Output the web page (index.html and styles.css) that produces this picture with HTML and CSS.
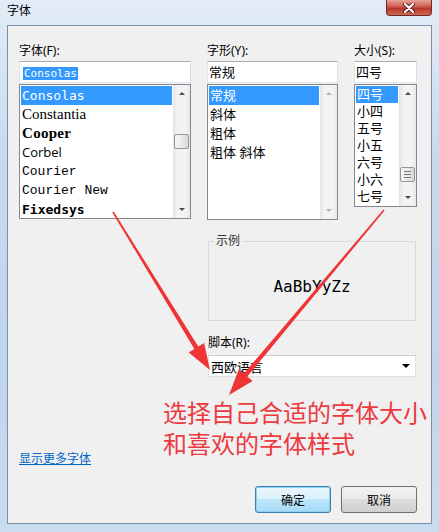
FILE: index.html
```html
<!DOCTYPE html>
<html lang="zh-CN">
<head>
  <meta charset="UTF-8">
  <title>字体</title>
  <link rel="stylesheet" href="styles.css">
</head>
<body>

  <div class="window">
    <div class="titlebar">
      <span class="title">字体</span>
      <button class="close" title="关闭">
        <svg width="12" height="10" viewBox="0 0 12 10">
          <path d="M2 1 L10 9 M10 1 L2 9" stroke="#5a1f1a" stroke-width="4" stroke-linecap="round"/>
          <path d="M2 1 L10 9 M10 1 L2 9" stroke="#fff" stroke-width="2.2" stroke-linecap="round"/>
        </svg>
      </button>
    </div>

    <div class="client">
      <div class="pickers">
        <!-- Schriftart -->
        <div class="field">
          <label>字体(F):</label>
          <div class="textbox"><span class="selected mono">Consolas</span></div>
          <div class="listbox font-list">
            <ul class="items">
              <li class="active f-consolas">Consolas</li>
              <li class="f-constantia">Constantia</li>
              <li class="f-cooper">Cooper</li>
              <li class="f-corbel">Corbel</li>
              <li class="f-courier">Courier</li>
              <li class="f-courier">Courier New</li>
              <li class="f-fixedsys">Fixedsys</li>
            </ul>
            <div class="scrollbar">
              <span class="arrow up"></span>
              <span class="thumb font-thumb"></span>
              <span class="arrow down"></span>
            </div>
          </div>
        </div>

        <!-- Schriftschnitt -->
        <div class="field">
          <label>字形(Y):</label>
          <div class="textbox">常规</div>
          <div class="listbox style-list">
            <ul class="items">
              <li class="active">常规</li>
              <li>斜体</li>
              <li>粗体</li>
              <li>粗体 斜体</li>
            </ul>
            <div class="scrollbar disabled">
              <span class="arrow up"></span>
              <span class="arrow down"></span>
            </div>
          </div>
        </div>

        <!-- Größe -->
        <div class="field">
          <label>大小(S):</label>
          <div class="textbox">四号</div>
          <div class="listbox size-list">
            <ul class="items">
              <li class="active">四号</li>
              <li>小四</li>
              <li>五号</li>
              <li>小五</li>
              <li>六号</li>
              <li>小六</li>
              <li>七号</li>
            </ul>
            <div class="scrollbar">
              <span class="arrow up"></span>
              <span class="thumb size-thumb"></span>
              <span class="arrow down"></span>
            </div>
          </div>
        </div>
      </div>

      <div class="lower">
        <fieldset class="sample">
          <legend>示例</legend>
          <div class="sample-text">AaBbYyZz</div>
        </fieldset>
        <label class="script-label">脚本(R):</label>
        <div class="select">
          <span>西欧语言</span>
          <span class="select-arrow"></span>
        </div>
      </div>

      <div class="footer">
        <a href="#" class="more">显示更多字体</a>
        <div class="buttons">
          <button class="btn default">确定</button>
          <button class="btn">取消</button>
        </div>
      </div>
    </div>

    <p class="note">选择自己合适的字体大小<br>和喜欢的字体样式</p>

    <svg class="arrows" width="439" height="532" viewBox="0 0 439 532">
      <g fill="#ee3434">
        <polygon points="112.3,212.4 113.7,211.6 200.5,350.1 196.5,352.5"/>
        <polygon points="210,370 188.7,352.5 204.1,343.1"/>
        <polygon points="384.6,210.5 383.4,209.5 241.3,376.6 244.9,379.6"/>
        <polygon points="229,395 252.6,380.9 238.8,369.3"/>
      </g>
    </svg>
  </div>

</body>
</html>
```

FILE: styles.css
```css
* {
  box-sizing: border-box;
}
body {
  margin: 0;
  font-family: "Noto Sans", "Noto Sans CJK SC", sans-serif;
  font-size: 12px;
  color: #000;
}
.window {
  position: relative;
  width: 439px;
  height: 532px;
  padding: 0 7px 8px 7px;
  display: flex;
  flex-direction: column;
  overflow: hidden;
  background: linear-gradient(#e2ecf7, #c6daef 30%, #bfd5ec 70%, #cadcf0);
}
.titlebar {
  height: 25px;
  display: flex;
  justify-content: space-between;
  align-items: flex-start;
}
.title {
  margin-top: 3px;
  line-height: 16px;
}
.close {
  width: 46px;
  height: 16px;
  margin: 0;
  padding: 0;
  border: 1px solid #6e2a24;
  border-top: none;
  border-radius: 0 0 4px 4px;
  background: linear-gradient(#e4a497, #cf5a4c 45%, #b8342a 55%, #cf6a55);
  display: flex;
  align-items: center;
  justify-content: center;
}
.client {
  flex: 1;
  background: #f0f0f0;
  border: 1px solid #7b8fa8;
}
.pickers {
  display: grid;
  grid-template-columns: 172px 131px 63px;
  column-gap: 16px;
  padding: 17px 0 0 11px;
  align-items: start;
}
label {
  display: block;
  height: 15px;
  line-height: 15px;
  margin-bottom: 3px;
}
.textbox {
  height: 22px;
  background: #fff;
  border: 1px solid;
  border-color: #abadb3 #dbdfe6 #e3e9ef #e2e3ea;
  padding: 2px 1px;
  line-height: 16px;
  font-size: 13px;
}
.textbox .selected {
  margin-left: 2px;
  background: #3399ff;
  color: #fff;
  padding: 0 1px;
}
.mono {
  font-family: "DejaVu Sans Mono", monospace;
  font-size: 11px;
}
.listbox {
  margin-top: 1px;
  display: flex;
  background: #fff;
  border: 1px solid #828790;
}
.font-list {
  height: 135px;
}
.style-list {
  height: 136px;
}
.size-list {
  height: 123px;
}
.items {
  flex: 1;
  list-style: none;
  margin: 0;
  padding: 1px;
  overflow: hidden;
}
.items li {
  height: 19px;
  line-height: 19px;
  padding-left: 1px;
  white-space: nowrap;
}
.style-list .items li {
  font-size: 13px;
}
.size-list .items li {
  height: 17px;
  line-height: 17px;
  font-size: 13px;
}
.items li.active {
  background: #3399ff;
  color: #fff;
}
.f-consolas {
  font-family: "DejaVu Sans Mono", monospace;
  font-size: 13px;
}
.f-constantia {
  font-family: "Liberation Serif", serif;
  font-size: 15px;
}
.f-cooper {
  font-family: "Liberation Serif", serif;
  font-size: 15px;
  font-weight: bold;
  letter-spacing: 0.3px;
}
.f-corbel {
  font-family: "Open Sans", sans-serif;
  font-size: 13px;
}
.f-courier {
  font-family: "Liberation Mono", monospace;
  font-size: 13px;
}
.f-fixedsys {
  font-family: "DejaVu Sans Mono", monospace;
  font-size: 13px;
  font-weight: bold;
}
.scrollbar {
  width: 17px;
  display: flex;
  flex-direction: column;
  background: linear-gradient(to right, #e3e3e3, #f3f3f3 25%, #f3f3f3 75%, #e8e8e8);
}
.arrow {
  height: 17px;
  display: flex;
  align-items: center;
  justify-content: center;
}
.arrow::after {
  content: "";
  border-left: 3px solid transparent;
  border-right: 3px solid transparent;
}
.arrow.up::after {
  border-bottom: 3px solid #4a4a4a;
}
.arrow.down {
  margin-top: auto;
}
.arrow.down::after {
  border-top: 3px solid #4a4a4a;
}
.disabled .arrow.up::after {
  border-bottom-color: #b4b4b4;
}
.disabled .arrow.down::after {
  border-top-color: #b4b4b4;
}
.thumb {
  height: 15px;
  margin: 0 1px;
  border: 1px solid #979797;
  border-radius: 2px;
  background: linear-gradient(to right, #f5f5f5, #ececec 50%, #d6d6d6);
}
.font-thumb {
  margin-top: 32px;
}
.size-thumb {
  margin-top: 65px;
  display: flex;
  align-items: center;
  justify-content: center;
}
.size-thumb::after {
  content: "";
  width: 7px;
  height: 7px;
  background: repeating-linear-gradient(#7a7a7a 0 1px, transparent 1px 3px);
}
.lower {
  margin: 15px 15px 0 200px;
}
.sample {
  margin: 0;
  padding: 0;
  height: 86px;
  border: 1px solid #d9d9d9;
}
.sample legend {
  margin-left: 5px;
  padding: 0 2px;
  line-height: 12px;
  color: #333;
}
.sample-text {
  padding-top: 30px;
  text-align: center;
  line-height: 20px;
  font-family: "DejaVu Sans Mono", monospace;
  font-size: 16px;
}
.script-label {
  margin: 14px 0 5px;
}
.select {
  height: 22px;
  display: flex;
  align-items: center;
  justify-content: space-between;
  padding: 0 5px 0 2px;
  background: #fff;
  border: 1px solid #e0e0e0;
  border-top-color: #cfcfcf;
  font-size: 13px;
}
.select-arrow {
  border-left: 4px solid transparent;
  border-right: 4px solid transparent;
  border-top: 4px solid #000;
}
.footer {
  padding: 73px 14px 0 11px;
}
.more {
  display: inline-block;
  line-height: 15px;
  color: #0066cc;
}
.buttons {
  margin-top: 19px;
  display: flex;
  justify-content: flex-end;
  gap: 10px;
}
.btn {
  width: 76px;
  height: 27px;
  font-family: inherit;
  font-size: 12px;
  border: 1px solid #707070;
  border-radius: 3px;
  background: linear-gradient(#f2f2f2, #ebebeb 50%, #dddddd 50%, #cfcfcf);
}
.btn.default {
  border-color: #3c7fb1;
  background: linear-gradient(#eaf6fd, #d9f0fc 50%, #bee6fd 50%, #a7d9f5);
  box-shadow: inset 0 0 0 1px #8ed1ef;
}
.note {
  position: absolute;
  left: 163px;
  top: 397px;
  margin: 0;
  font-size: 24px;
  line-height: 31px;
  color: #ec3a40;
}
.arrows {
  position: absolute;
  left: 0;
  top: 0;
  pointer-events: none;
}
```
